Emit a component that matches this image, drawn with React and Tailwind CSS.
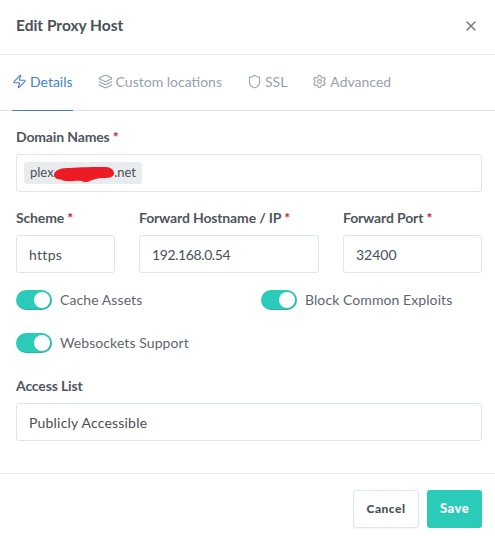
import React from "react";
import { Zap, Layers, Shield, Settings, X } from "lucide-react";

function Label({ children, required }) {
  return (
    <div className="mb-[7px] text-[14px] leading-[20px] font-bold tracking-[-0.15px] text-[#4f565e] whitespace-nowrap">
      {children}
      {required && <span className="text-[#cd201f]"> *</span>}
    </div>
  );
}

function Field({ children, tracking }) {
  return (
    <div className="h-[38px] w-full rounded-[3px] border border-[#dfe4ee] bg-white px-3 flex items-center text-[14px] text-[#495057] whitespace-nowrap">
      <span className={tracking}>{children}</span>
    </div>
  );
}

function Toggle({ label }) {
  return (
    <div className="flex items-center gap-[8px]">
      <div className="w-[36px] h-[20px] rounded-full bg-[#2bcbba] flex items-center justify-end pr-[2px] shadow-[inset_-1px_-1px_1px_rgba(0,0,0,0.12)]">
        <div className="w-[16px] h-[16px] rounded-full bg-white" />
      </div>
      <span className="text-[14px] leading-[20px] tracking-[0.08px] text-[#5f6670] whitespace-nowrap">{label}</span>
    </div>
  );
}

function Tab({ icon: Icon, children, active }) {
  return (
    <div
      className={
        "h-[56px] -mb-px pb-[2px] flex items-center gap-[3px] text-[14px] border-b " +
        (active ? "text-[#467fcf] border-[#467fcf]" : "text-[#9aa0ac] border-transparent")
      }
    >
      <Icon size={15} strokeWidth={1.75} />
      <span>{children}</span>
    </div>
  );
}

export default function App() {
  return (
    <div className="w-[495px] h-[536px] bg-white flex flex-col font-['Lato','Noto_Sans',sans-serif]">
      <div className="h-[55px] shrink-0 border-b border-[#e9ecef] pl-[16px] pr-[16px] pb-[3px] flex items-center justify-between">
        <div className="text-[15.5px] font-bold text-[#495057]">Edit Proxy Host</div>
        <X size={16} strokeWidth={2} className="text-[#6e7580]" />
      </div>
      <div className="h-[56px] shrink-0 border-b border-[#dfe2e8] pl-[12px] flex gap-[25px]">
        <Tab icon={Zap} active>Details</Tab>
        <Tab icon={Layers}>Custom locations</Tab>
        <Tab icon={Shield}>SSL</Tab>
        <Tab icon={Settings}>Advanced</Tab>
      </div>

      <div className="flex-1 px-[16px] pt-[16px] pr-[13px] flex flex-col">
        <Label required>Domain Names</Label>
        <div className="h-[38px] w-full rounded-[3px] border border-[#dfe4ee] bg-white pl-[7px] flex items-center">
          <div className="relative h-[22px] w-[118px] rounded-[3px] bg-[#e9ecef] px-[6px] flex items-center justify-between text-[13px] text-[#495057]">
            <span>plex.</span>
            <span>.net</span>
            <svg className="absolute left-[30px] top-[5px]" width="61" height="16" viewBox="0 0 61 16">
              <path d="M0 7 C2 2 8 1 15 1 C26 0 40 0 52 0 C56 0 60 3 60 6 C60 10 56 11 50 11 C44 11 42 12 38 13 C35 15 30 16 28 14 C22 13 17 15 12 14 C9 14 7 12 3 12 C1 11 0 9 0 7 Z" fill="#ed1c24" />
            </svg>
          </div>
        </div>

        <div className="mt-[16px] flex gap-[24px]">
          <div className="w-[99px] shrink-0">
            <Label required>Scheme</Label>
            <Field tracking="tracking-[0.3px]">https</Field>
          </div>
          <div className="w-[180px] shrink-0">
            <Label required>Forward Hostname / IP</Label>
            <Field tracking="tracking-[-0.4px]">192.168.0.54</Field>
          </div>
          <div className="flex-1">
            <Label required>Forward Port</Label>
            <Field>32400</Field>
          </div>
        </div>

        <div className="mt-[17px] grid grid-cols-[245px_1fr] gap-y-[23px]">
          <Toggle label="Cache Assets" />
          <Toggle label="Block Common Exploits" />
          <Toggle label="Websockets Support" />
        </div>

        <div className="mt-[23px]">
          <Label>Access List</Label>
          <Field tracking="tracking-[0.2px]">Publicly Accessible</Field>
        </div>
      </div>

      <div className="h-[63px] shrink-0 border-t border-[#e9ecef] pr-[13px] pt-[16px] flex justify-end gap-[8px]">
        <div className="h-[38px] w-[66px] rounded-[3px] border border-[#dfe4ee] bg-white shadow-[0_1px_1px_rgba(0,0,0,0.05)] flex items-center justify-center text-[12px] font-black tracking-[0.5px] text-[#495057]">
          Cancel
        </div>
        <div className="h-[38px] w-[55px] rounded-[3px] bg-[#2bcbba] flex items-center justify-center text-[13px] font-black tracking-[0.5px] text-white">
          Save
        </div>
      </div>
    </div>
  );
}
